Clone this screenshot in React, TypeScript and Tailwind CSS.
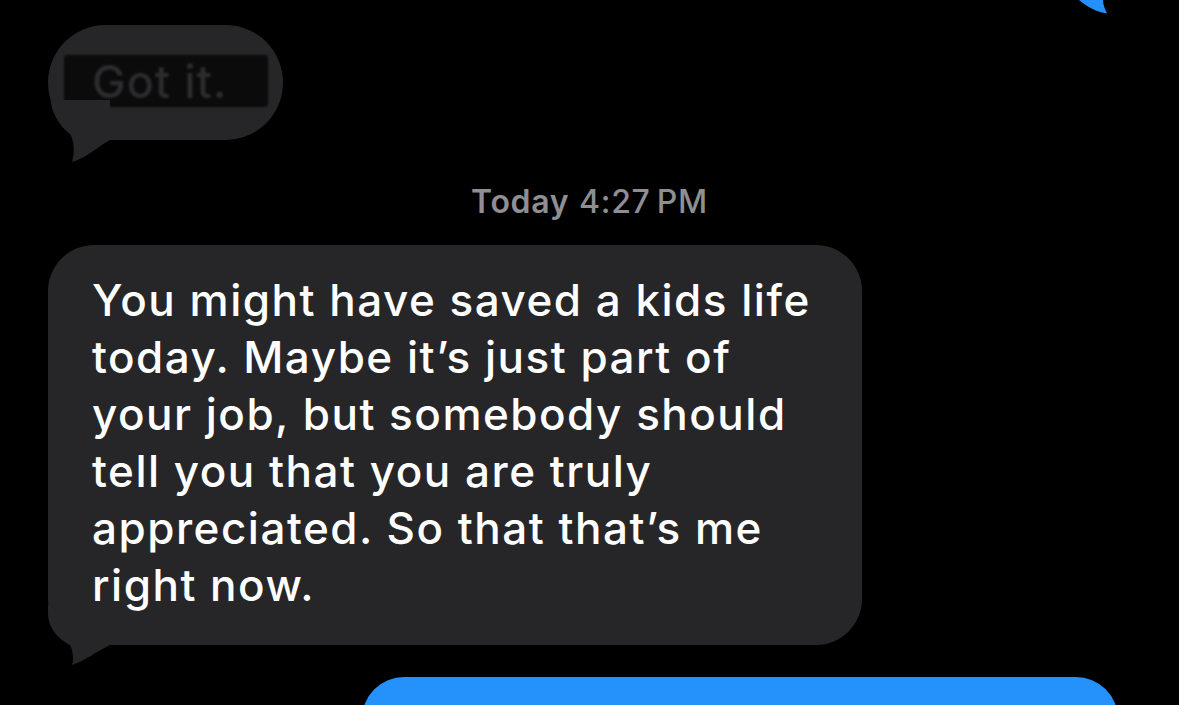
const LINES = [
  "You might have saved a kids life",
  "today. Maybe it\u2019s just part of",
  "your job, but somebody should",
  "tell you that you are truly",
  "appreciated. So that that\u2019s me",
  "right now.",
];

export default function App() {
  return (
    <div
      className="relative h-[705px] w-[1179px] overflow-hidden bg-black"
      style={{ fontFamily: "Inter, 'Noto Sans', sans-serif" }}
    >
      {/* tail of the blue bubble above, out of frame */}
      <svg viewBox="0 0 40 16" className="absolute left-[1070px] top-0 h-[16px] w-[40px]" fill="#2590fb">
        <path d="M9 0 C17 7 27 12 37 13.5 C35 9 33 5 33 0 Z" />
      </svg>

      <div className="flex flex-col pt-[25px]">
        {/* Got it. (blurred out) */}
        <div className="relative ml-[48px] h-[115px] w-[235px] rounded-[58px] bg-[#262628]">
          <div className="absolute left-[16px] top-[30px] flex h-[52px] w-[204px] items-center rounded-[3px] bg-[#0b0b0c] pl-[28px] blur-[1px]">
            <span className="text-[45px] font-medium leading-none tracking-[1px] text-[#2c2c2e]">Got it.</span>
          </div>
          <svg viewBox="0 0 64 62" className="absolute -bottom-[22px] left-0 h-[62px] w-[64px]" fill="#262628">
            <path d="M2.7 0 C4 16 14 28 22 34 C26 40 27 52 24 62 C38 58 48 48 62 40 L62 0 Z" />
          </svg>
        </div>

        {/* timestamp */}
        <div className="mt-[43px] text-center text-[32px] leading-[38px] tracking-[0.7px] text-[#8e8e93]">
          <span className="font-semibold">Today</span> <span className="font-medium">4:27&#8201;PM</span>
        </div>

        {/* incoming message */}
        <div className="relative ml-[48px] mt-[24px] w-[814px] rounded-[46px] bg-[#262628] pb-[31px] pl-[44px] pt-[27px]">
          {LINES.map((line) => (
            <div key={line} className="whitespace-nowrap text-[44px] font-medium leading-[57px] tracking-[1.5px] text-white">
              {line}
            </div>
          ))}
          <svg viewBox="0 0 64 60" className="absolute -bottom-[20px] left-0 h-[60px] w-[64px]" fill="#262628">
            <path d="M0 0 V8 C0 26 14 36 22 40 C25 46 26 54 24 60 C36 56 48 47 62 40 L62 0 Z" />
          </svg>
        </div>

        {/* outgoing bubble, cut off */}
        <div className="ml-[362px] mt-[32px] h-[120px] w-[756px] rounded-[42px] bg-[#2591fb]" />
      </div>
    </div>
  );
}
